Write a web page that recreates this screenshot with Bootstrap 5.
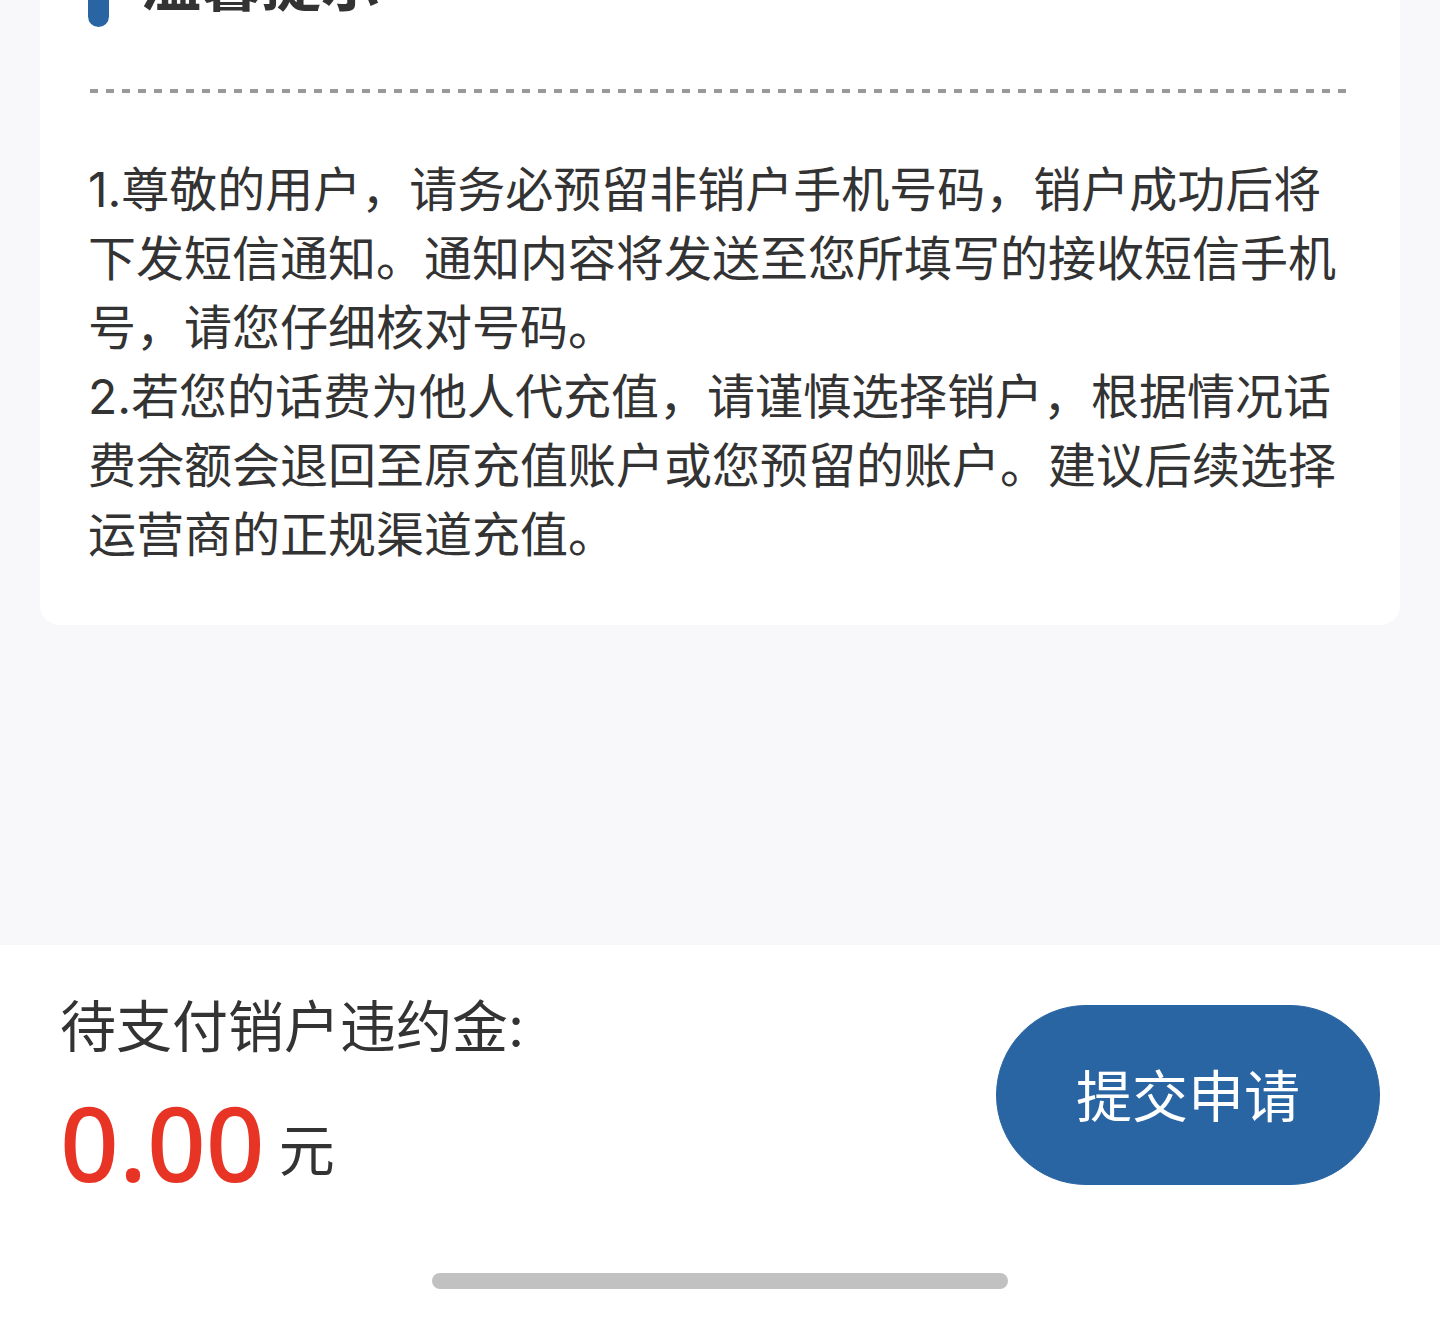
<!DOCTYPE html>
<html lang="zh-CN">
<head>
<meta charset="utf-8">
<meta name="viewport" content="width=device-width, initial-scale=1">
<title>销户申请</title>
<link href="https://cdn.jsdelivr.net/npm/bootstrap@5.3.0/dist/css/bootstrap.min.css" rel="stylesheet">
<style>
  body { background: #f8f8fb; color: #333; font-family: Inter, "Noto Sans CJK SC", sans-serif; }
  /* the page is scrolled: the top of the card is out of view */
  .tips-card { margin: -77px 40px 0; padding: 24px 48px 56px; border-radius: 20px; }
  .tips-bar { width: 21px; height: 80px; border-radius: 11px; background: #2a65a3; }
  .tips-title { font-size: 60px; line-height: 74px; font-weight: 700; }
  .tips-head { gap: 32px; }
  .dash-rule { height: 4px; margin: 62px 2px; opacity: 1; border: 0;
    background: repeating-linear-gradient(90deg, #999 0 8px, transparent 8px 16px); }
  .tips-text { font-size: 48px; line-height: 69px; }
  .pay-bar { padding: 40px 0 28px; }
  .pay-row { padding: 0 60px; }
  .pay-label { font-size: 56px; line-height: 84px; }
  .pay-amount { gap: 14px; }
  .pay-sum { font-family: "Noto Sans", "Noto Sans CJK SC", sans-serif; font-size: 103px; line-height: 146px; font-weight: 500; color: #e83425; }
  .pay-unit { font-size: 56px; line-height: 128px; }
  .submit-btn { width: 384px; height: 180px; font-size: 56px; line-height: 84px; margin-top: 20px; padding: 10px 0 6px;
    --bs-btn-color: #fff; --bs-btn-bg: #2a65a3; --bs-btn-border-color: #2a65a3;
    --bs-btn-hover-color: #fff; --bs-btn-hover-bg: #235890; --bs-btn-hover-border-color: #235890; }
  .home-line { width: 40%; height: 16px; border-radius: 8px; background: #c1c1c1; margin-top: 58px; }
</style>
</head>
<body>
<div class="d-flex flex-column min-vh-100 overflow-hidden">
  <main class="flex-grow-1">
    <section class="tips-card bg-white">
      <div class="tips-head d-flex align-items-start">
        <span class="tips-bar"></span>
        <h2 class="tips-title mb-0">温馨提示</h2>
      </div>
      <hr class="dash-rule">
      <p class="tips-text mb-0">1.尊敬的用户，请务必预留非销户手机号码，销户成功后将下发短信通知。通知内容将发送至您所填写的接收短信手机号，请您仔细核对号码。</p>
      <p class="tips-text mb-0">2.若您的话费为他人代充值，请谨慎选择销户，根据情况话费余额会退回至原充值账户或您预留的账户。建议后续选择运营商的正规渠道充值。</p>
    </section>
  </main>
  <footer class="pay-bar bg-white">
    <div class="pay-row d-flex justify-content-between align-items-start">
      <div>
        <div class="pay-label">待支付销户违约金:</div>
        <div class="pay-amount d-flex align-items-end">
          <span class="pay-sum">0.00</span>
          <span class="pay-unit">元</span>
        </div>
      </div>
      <button type="button" class="submit-btn btn rounded-pill">提交申请</button>
    </div>
    <div class="home-line mx-auto"></div>
  </footer>
</div>
<script src="https://cdn.jsdelivr.net/npm/bootstrap@5.3.0/dist/js/bootstrap.bundle.min.js"></script>
</body>
</html>
